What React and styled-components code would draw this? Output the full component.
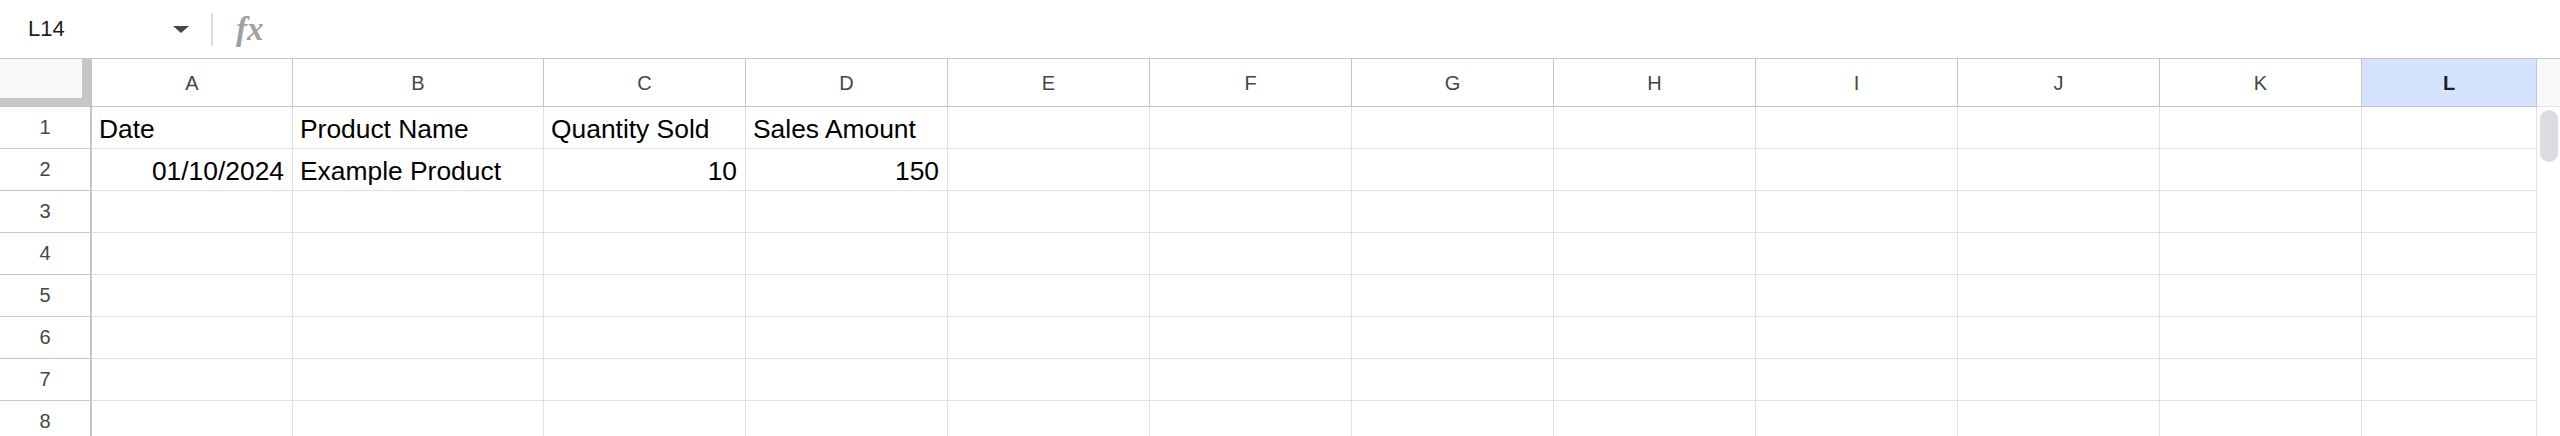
import styled, { createGlobalStyle } from "styled-components";

const GlobalStyle = createGlobalStyle`
  * { box-sizing: border-box; }
  body {
    margin: 0;
    background: #ffffff;
    font-family: "Liberation Sans", Arial, sans-serif;
  }
`;

const COLUMNS = ["A", "B", "C", "D", "E", "F", "G", "H", "I", "J", "K", "L"];
const WIDTHS = [201, 251, 202, 202, 202, 202, 202, 202, 202, 202, 202, 175];
const TEMPLATE = `92px ${WIDTHS.map((w) => `${w}px`).join(" ")}`;

const ROWS = [
  [
    { text: "Date" },
    { text: "Product Name" },
    { text: "Quantity Sold" },
    { text: "Sales Amount" },
  ],
  [
    { text: "01/10/2024", right: true },
    { text: "Example Product" },
    { text: "10", right: true },
    { text: "150", right: true },
  ],
  [], [], [], [], [], [], [],
];

const Sheet = styled.div`
  width: 2560px;
  height: 436px;
  overflow: hidden;
  background: #fff;
`;

const FormulaBar = styled.div`
  display: flex;
  align-items: center;
  height: 58px;
`;

const NameBox = styled.div`
  display: flex;
  align-items: center;
  justify-content: space-between;
  width: 189px;
  padding-left: 28px;
  font-size: 22px;
  color: #1f1f1f;
`;

const Caret = styled.span`
  width: 0;
  height: 0;
  border-left: 8px solid transparent;
  border-right: 8px solid transparent;
  border-top: 7px solid #444746;
`;

const Divider = styled.span`
  width: 2px;
  height: 33px;
  margin-left: 22px;
  background: #dadce0;
`;

const Fx = styled.span`
  margin-left: 23px;
  font-family: "Liberation Serif", "Times New Roman", serif;
  font-style: italic;
  font-weight: 700;
  font-size: 33px;
  color: #a0a0a0;
  line-height: 1;
`;

const HeaderRow = styled.div`
  display: grid;
  grid-template-columns: ${TEMPLATE} 23px;
  height: 49px;
  border-top: 1px solid #c4c7c5;
`;

const Corner = styled.div`
  height: 48px;
  background: #f8f9fa;
  border-right: 2px solid #c4c7c5;
  border-bottom: 1px solid #c4c7c5;
  box-shadow: inset -8px -8px 0 #c7c7c7;
`;

const ColHead = styled.div`
  display: flex;
  align-items: center;
  justify-content: center;
  height: 48px;
  padding-top: 1px;
  font-size: 20px;
  font-weight: ${(p) => (p.$selected ? 700 : 400)};
  color: ${(p) => (p.$selected ? "#1f1f1f" : "#444746")};
  background: ${(p) => (p.$selected ? "#d3e3fd" : "#fff")};
  border-right: 1px solid #c4c7c5;
  border-bottom: 1px solid #c4c7c5;
`;

const ScrollCorner = styled.div`
  height: 48px;
  background: #f8f9fa;
  border-bottom: 1px solid #e1e1e1;
`;

const Body = styled.div`
  display: flex;
`;

const Rows = styled.div`
  display: flex;
  flex-direction: column;
`;

const Row = styled.div`
  display: grid;
  grid-template-columns: ${TEMPLATE};
  height: 42px;
`;

const RowHead = styled.div`
  display: flex;
  align-items: center;
  justify-content: center;
  font-size: 20px;
  color: #444746;
  border-right: 2px solid #c4c7c5;
  border-bottom: 1px solid #c4c7c5;
`;

const Cell = styled.div`
  display: flex;
  align-items: flex-end;
  justify-content: ${(p) => (p.$right ? "flex-end" : "flex-start")};
  padding: 0 8px 3px 7px;
  font-size: 26.4px;
  color: #000;
  white-space: nowrap;
  overflow: hidden;
  border-right: 1px solid #e1e1e1;
  border-bottom: 1px solid #e1e1e1;
`;

const ScrollTrack = styled.div`
  width: 23px;
  padding: 3px 2px 0 3px;
`;

const Thumb = styled.div`
  width: 18px;
  height: 52px;
  border-radius: 9px;
  background: #dadce0;
`;

export default function App() {
  return (
    <>
      <GlobalStyle />
      <Sheet>
        <FormulaBar>
          <NameBox>
            L14
            <Caret />
          </NameBox>
          <Divider />
          <Fx>fx</Fx>
        </FormulaBar>

        <HeaderRow>
          <Corner />
          {COLUMNS.map((c) => (
            <ColHead key={c} $selected={c === "L"}>
              {c}
            </ColHead>
          ))}
          <ScrollCorner />
        </HeaderRow>

        <Body>
          <Rows>
            {ROWS.map((cells, r) => (
              <Row key={r}>
                <RowHead>{r + 1}</RowHead>
                {COLUMNS.map((c, i) => (
                  <Cell key={c} $right={cells[i]?.right}>
                    {cells[i]?.text}
                  </Cell>
                ))}
              </Row>
            ))}
          </Rows>
          <ScrollTrack>
            <Thumb />
          </ScrollTrack>
        </Body>
      </Sheet>
    </>
  );
}
